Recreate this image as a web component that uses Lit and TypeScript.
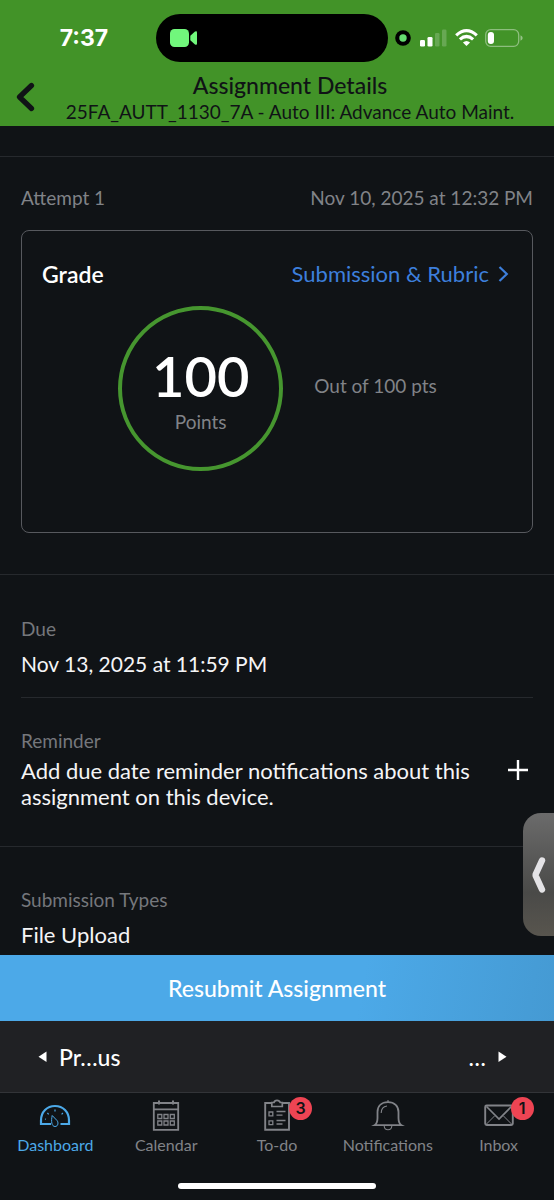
import { LitElement, html, svg, css, nothing, type TemplateResult } from "lit";
import { customElement, property } from "lit/decorators.js";
import { classMap } from "lit/directives/class-map.js";

@customElement("status-bar")
class StatusBar extends LitElement {
  static styles = css`
    :host {
      display: grid;
      grid-template-columns: 1fr 232px 1fr;
      align-items: center;
      padding: 14px 10px 0 0;
      color: #fff;
    }
    .time {
      text-align: center;
      font: 700 23px/26px Inter, sans-serif;
      padding-left: 12px;
    }
    .island {
      height: 48px;
      border-radius: 24px;
      background: #000;
      display: flex;
      align-items: center;
      padding-left: 14px;
      box-sizing: border-box;
    }
    .right {
      display: flex;
      align-items: center;
      padding-left: 7px;
    }
    svg {
      display: block;
      flex: none;
    }
    .signal {
      margin-left: 9px;
    }
    .wifi {
      margin-left: 8px;
    }
    .battery {
      margin-left: 7px;
    }
  `;

  render() {
    return html`
      <div class="time">7:37</div>
      <div class="island">
        <svg width="28" height="18" viewBox="0 0 28 18" fill="#71f77c" aria-hidden="true">
          <rect width="19" height="18" rx="4.5" />
          <path d="M20.3 6.8 25 2.6Q27 1.300 27 3.600V14.400Q27 16.700 25 15.400L20.300 11.200Z" />
        </svg>
      </div>
      <div class="right">
        <svg width="16" height="16" viewBox="0 0 16 16" aria-hidden="true">
          <circle cx="8" cy="8" r="7.800" fill="#000" />
          <circle cx="8" cy="8" r="3.700" fill="#66dc70" />
        </svg>
        <svg class="signal" width="27" height="18" viewBox="0 0 27 18" fill="#fff" aria-hidden="true">
          <rect y="11" width="5" height="6.500" rx="1.300" />
          <rect x="7.500" y="8" width="5" height="9.500" rx="1.300" />
          <rect x="15" y="4" width="4.500" height="13.500" rx="1.300" opacity=".2" />
          <rect x="22" y="0.500" width="4.500" height="17" rx="1.300" opacity=".2" />
        </svg>
        <svg class="wifi" width="23" height="18" viewBox="0 0 23 18" fill="none" stroke="#fff" stroke-width="3.200" aria-hidden="true">
          <path d="M1.200 6.400Q11.500-3 21.800 6.400" />
          <path d="M4.900 10.400Q11.500 4.600 18.100 10.400" />
          <path d="M11.500 17 7.900 13.600Q11.500 10.400 15.100 13.600Z" fill="#fff" stroke="none" />
        </svg>
        <svg class="battery" width="38" height="18" viewBox="0 0 38 18" aria-hidden="true">
          <rect x=".7" y=".7" width="33" height="16.600" rx="5" fill="none" stroke="#fff" stroke-opacity=".4" stroke-width="1.300" />
          <rect x="2.800" y="3" width="6.200" height="12" rx="3" fill="#fff" />
          <path d="M35.500 6.300Q37.700 7.200 37.700 9T35.500 11.800Z" fill="#fff" opacity=".45" />
        </svg>
      </div>
    `;
  }
}

@customElement("detail-item")
class DetailItem extends LitElement {
  @property() label = "";

  static styles = css`
    :host {
      display: block;
    }
    .label {
      margin: 0;
      font-weight: 400;
      font-size: 19px;
      line-height: 24px;
      color: #75777c;
    }
    .value {
      font-size: var(--value-size, 22px);
      line-height: 26px;
      color: #f5f5f6;
      margin-top: var(--value-gap, 10px);
    }
  `;

  render() {
    return html`<h2 class="label">${this.label}</h2>
      <div class="value"><slot></slot></div>`;
  }
}

type TabName = "Dashboard" | "Calendar" | "To-do" | "Notifications" | "Inbox";

const tabs: { name: TabName; badge?: number }[] = [
  { name: "Dashboard" },
  { name: "Calendar" },
  { name: "To-do", badge: 3 },
  { name: "Notifications" },
  { name: "Inbox", badge: 1 },
];

const glyphs: Record<TabName, TemplateResult> = {
  Dashboard: svg`
    <path stroke-width="2.200" d="M13 26H3V22.500C3 14 9 8 17 8S31 14 31 22.500V26H22.500" />
    <path stroke-width="1" d="M14.200 17.500C13 23 13.500 28.500 17 28.500S20.500 24 19 22.500Z" />
    <path stroke-width="1.200" d="M17 11.500v2M9.400 15l1.300 1.300M24.900 15l-1.300 1.300M7 21l1 .3" />`,
  Calendar: svg`
    <path stroke-width="1.800" d="M4.800 5H29.200V31.800H4.800ZM4.800 11.300H29.200" />
    <path stroke-width="2" d="M10 2.500V6.500M24 2.500V6.500" />
    <path stroke-width="1.300" d="M8.800 16.500h4v4h-4zM15 16.500h4v4h-4zM21.300 16.500h4v4h-4zM8.800 23h4v4h-4zM15 23h4v4h-4zM21.300 23h4v4h-4z" />`,
  "To-do": svg`
    <path stroke-width="1.900" d="M11.500 5H5.200V31.800H29V5H22.700" />
    <path stroke-width="1.700" d="M11.800 8.500V4.500H14Q14.500 2.300 17 2.300T20.200 4.500H22.300V8.500Z" />
    <path stroke-width="1.300" d="M9 14h3.800v3.800H9zM9 22.800h3.800v3.800H9zM16.500 13.500h9M16.500 17.200h6M16.500 22.500h9M16.500 26h6" />`,
  Notifications: svg`
    <path stroke-width="1.800" d="M3.500 27.200C6.500 25.500 6.500 23 6.500 20V14C6.500 8 10.500 4.200 17 4.200S27.500 8 27.500 14V20C27.500 23 27.500 25.500 30.500 27.200Z" />
    <path stroke-width="1.100" d="M17 2v2M10.200 15C10.200 11 12 8.500 16 8M13.200 28C13.500 33 20.500 33 20.800 28" />`,
  Inbox: svg`
    <rect x="3.200" y="7.500" width="27.600" height="19.500" rx="1.500" stroke-width="1.900" />
    <path stroke-width="1.700" d="M4.500 8.500 17 21 29.500 8.500" />
    <path stroke-width="1" d="M4.500 26 12.500 18M29.500 26 21.500 18" />`,
};

@customElement("tab-bar")
class TabBar extends LitElement {
  static styles = css`
    :host {
      display: block;
      background: #101316;
      border-top: 1px solid #323438;
    }
    .tabs {
      display: grid;
      grid-template-columns: repeat(5, 1fr);
      padding-top: 5px;
    }
    .tab {
      display: flex;
      flex-direction: column;
      align-items: center;
      color: #818388;
      text-decoration: none;
      font-size: 16px;
      line-height: 20px;
      gap: 3px;
    }
    .active {
      color: #4ca9e8;
    }
    .icon {
      position: relative;
      width: 34px;
      height: 34px;
    }
    svg {
      display: block;
      fill: none;
      stroke: currentColor;
    }
    .badge {
      position: absolute;
      left: 29px;
      top: -1px;
      width: 23px;
      height: 23px;
      border-radius: 50%;
      background: #ee4453;
      color: #101316;
      text-align: center;
      font: 600 16px/23px Inter, sans-serif;
    }
    .home {
      width: 198px;
      height: 6px;
      border-radius: 3px;
      background: #fff;
      margin: 28px auto 11px;
    }
  `;

  render() {
    return html`
      <nav class="tabs" aria-label="Main">
        ${tabs.map(
          (tab, i) => html`
            <a href="#" class=${classMap({ tab: true, active: i === 0 })}>
              <span class="icon">
                <svg width="34" height="34" viewBox="0 0 34 34" aria-hidden="true">${glyphs[tab.name]}</svg>
                ${tab.badge ? html`<span class="badge">${tab.badge}</span>` : nothing}
              </span>
              <span>${tab.name}</span>
            </a>
          `
        )}
      </nav>
      <div class="home"></div>
    `;
  }
}

@customElement("app-root")
class AppRoot extends LitElement {
  static styles = css`
    :host {
      display: flex;
      flex-direction: column;
      height: 100vh;
      background: #101316;
      color: #f5f5f6;
      font-family: Lato, sans-serif;
    }
    * {
      box-sizing: border-box;
    }
    button {
      font: inherit;
      color: inherit;
      background: none;
      border: 0;
      padding: 0;
      margin: 0;
      cursor: pointer;
    }
    svg {
      display: block;
    }
    .header {
      background: #429328;
      color: #101316;
    }
    .nav {
      display: grid;
      grid-template-columns: 50px 1fr 24px;
      align-items: center;
      height: 64px;
      padding-top: 6px;
    }
    .back {
      justify-self: center;
    }
    .titles {
      text-align: center;
      white-space: nowrap;
      padding-top: 2px;
    }
    .title {
      margin: 0;
      font-size: 23px;
      line-height: 28px;
      font-weight: 500;
    }
    .course {
      margin: 0;
      font-size: 19px;
      line-height: 26px;
    }
    .content {
      flex: 1;
      min-height: 0;
      overflow: hidden auto;
      scrollbar-width: none;
    }
    .attempt {
      margin-top: 30px;
      border: solid #26292d;
      border-width: 1px 0;
      padding: 29px 21px 41px;
    }
    .row {
      display: flex;
      justify-content: space-between;
      align-items: center;
    }
    .muted {
      font-size: 19px;
      line-height: 24px;
      color: #818388;
    }
    .card {
      margin-top: 20px;
      height: 303px;
      border: 1px solid #57595e;
      border-radius: 8px;
      padding: 28px 23px 0 20px;
    }
    .grade {
      margin: 0;
      font-size: 23px;
      line-height: 30px;
      font-weight: 600;
      color: #fff;
    }
    .link {
      display: flex;
      align-items: center;
      gap: 9px;
      font-size: 22px;
      line-height: 30px;
      color: #3d7fdc;
      text-decoration: none;
    }
    .score {
      display: flex;
      align-items: center;
      justify-content: center;
      gap: 31px;
      margin-top: 17px;
      padding-left: 4px;
    }
    .ring {
      width: 165px;
      height: 165px;
      border: 4px solid #46962f;
      border-radius: 50%;
      display: flex;
      flex-direction: column;
      align-items: center;
      padding-top: 32px;
    }
    .points {
      font-size: 56px;
      line-height: 68px;
      font-weight: 600;
      color: #fff;
    }
    .total {
      padding-bottom: 6px;
    }
    .due {
      margin: 0 21px;
      padding: 42px 0 20px;
      border-bottom: 1px solid #26292d;
      --value-size: 21px;
    }
    .reminder {
      display: flex;
      align-items: center;
      justify-content: space-between;
      padding: 31px 20px 36px 21px;
      border-bottom: 1px solid #26292d;
      --value-gap: 5px;
    }
    .reminder detail-item {
      max-width: 460px;
    }
    .add {
      padding: 6px 5px;
    }
    .types {
      padding: 41px 21px 0;
    }
    .resubmit {
      height: 66px;
      background: linear-gradient(100deg, #4ca9e8 65%, #459ad3);
      color: #fff;
      font-size: 23px;
      font-weight: 500;
    }
    .pager {
      display: flex;
      justify-content: space-between;
      align-items: center;
      height: 71px;
      background: #202124;
      padding: 0 47px 0 38px;
      font-size: 23px;
      font-weight: 500;
      color: #fff;
    }
    .step {
      display: flex;
      align-items: center;
      gap: 12px;
    }
    .drawer {
      position: fixed;
      right: 0;
      bottom: 264px;
      width: 31px;
      height: 123px;
      border-radius: 18px 0 0 18px;
      background: linear-gradient(#6b6b6b, #4a4a48 65%, #58554e);
      padding-left: 9px;
    }
  `;

  render() {
    return html`
      <header class="header">
        <status-bar></status-bar>
        <div class="nav">
          <button class="back" aria-label="Back">
            <svg width="20" height="30" viewBox="0 0 20 30" fill="none" stroke="#101316" stroke-width="5.200" stroke-linecap="round" stroke-linejoin="round">
              <path d="M16.500 3.500 4.500 15 16.500 26.500" />
            </svg>
          </button>
          <div class="titles">
            <h1 class="title">Assignment Details</h1>
            <p class="course">25FA_AUTT_1130_7A - Auto III: Advance Auto Maint.</p>
          </div>
        </div>
      </header>

      <main class="content">
        <section class="attempt">
          <div class="row muted">
            <span>Attempt 1</span>
            <time>Nov 10, 2025 at 12:32\u202fPM</time>
          </div>
          <div class="card">
            <div class="row">
              <h2 class="grade">Grade</h2>
              <a class="link" href="#">
                Submission &amp; Rubric
                <svg width="11" height="18" viewBox="0 0 11 18" fill="none" stroke="currentColor" stroke-width="2.200">
                  <path d="M1.500 2 8.800 9 1.500 16" />
                </svg>
              </a>
            </div>
            <div class="score">
              <div class="ring">
                <span class="points">100</span>
                <span class="muted">Points</span>
              </div>
              <span class="muted total">Out of 100 pts</span>
            </div>
          </div>
        </section>

        <section class="due">
          <detail-item label="Due">Nov 13, 2025 at 11:59\u202fPM</detail-item>
        </section>

        <section class="reminder">
          <detail-item label="Reminder">Add due date reminder notifications about this assignment on this device.</detail-item>
          <button class="add" aria-label="Add reminder">
            <svg width="22" height="22" viewBox="0 0 22 22" stroke="#fff" stroke-width="2.400">
              <path d="M11 1V21M1 11H21" />
            </svg>
          </button>
        </section>

        <section class="types">
          <detail-item label="Submission Types">File Upload</detail-item>
        </section>
      </main>

      <button class="resubmit">Resubmit Assignment</button>
      <div class="pager">
        <button class="step" aria-label="Previous">
          <svg width="9" height="12" viewBox="0 0 9 12" fill="#fff"><path d="M8.500.5V11L.5 5.800Z" /></svg>
          Pr…us
        </button>
        <button class="step" aria-label="Next">
          …
          <svg width="9" height="12" viewBox="0 0 9 12" fill="#fff"><path d="M.5.500V11L8.500 5.800Z" /></svg>
        </button>
      </div>
      <tab-bar></tab-bar>
      <button class="drawer" aria-label="Show video">
        <svg width="14" height="38" viewBox="0 0 14 38" fill="none" stroke="#e4e3e6" stroke-width="6.400" stroke-linecap="round" stroke-linejoin="round">
          <path d="M10 4.500 3.800 18Q3.500 19 3.800 20L10 33.500" />
        </svg>
      </button>
    `;
  }
}
